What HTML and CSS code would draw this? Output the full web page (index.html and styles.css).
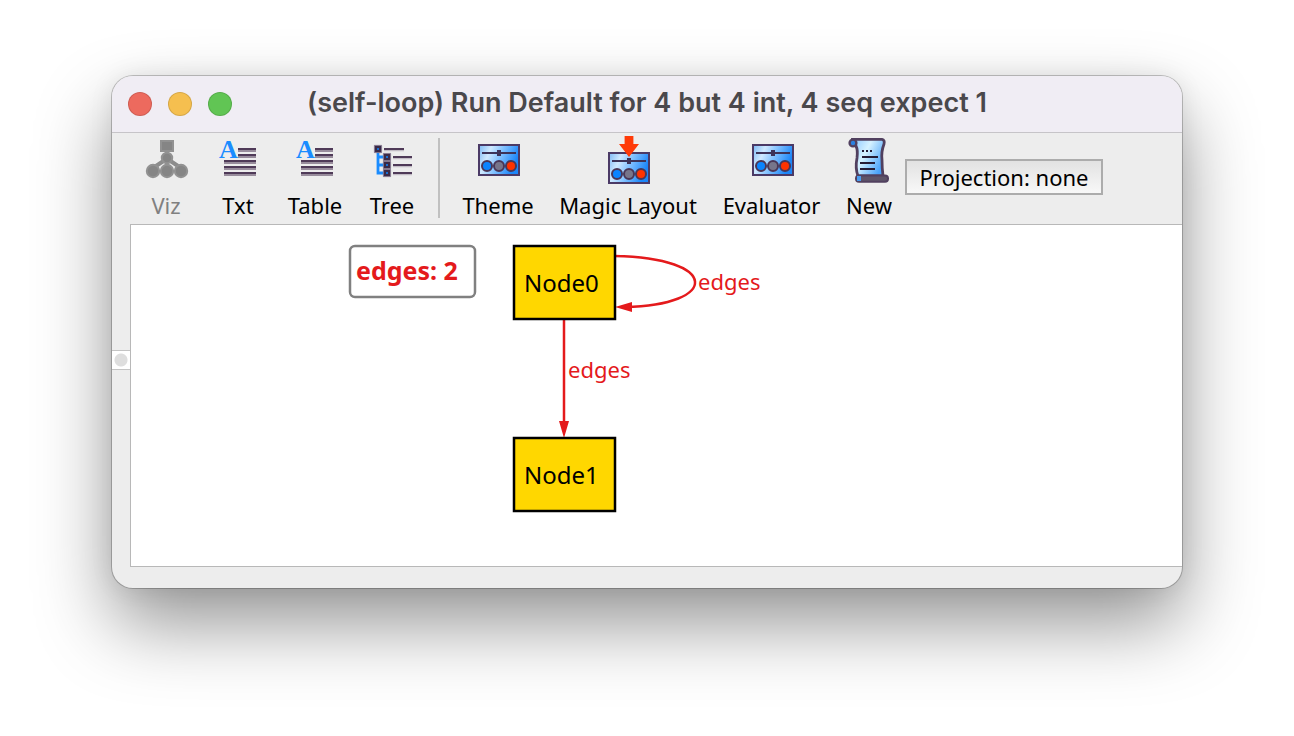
FILE: index.html
```html
<!DOCTYPE html>
<html lang="en">
<head>
<meta charset="utf-8">
<title>(self-loop) Run Default for 4 but 4 int, 4 seq expect 1</title>
<link rel="stylesheet" href="styles.css">
</head>
<body>
<svg class="defs" aria-hidden="true">
  <defs>
    <linearGradient id="panel" x1="0" y1="0" x2="1" y2="0.3">
      <stop offset="0" stop-color="#7db9f5"/><stop offset="0.3" stop-color="#cfe9ff"/><stop offset="0.6" stop-color="#7fc0ff"/><stop offset="1" stop-color="#1c86f8"/>
    </linearGradient>
    <linearGradient id="paper" x1="0" y1="0" x2="1" y2="0.6">
      <stop offset="0" stop-color="#8cc8ff"/><stop offset="0.45" stop-color="#d6f2ff"/><stop offset="1" stop-color="#49a2fa"/>
    </linearGradient>
    <g id="mixer">
      <rect x="2.5" y="4.5" width="20" height="15" fill="url(#panel)" stroke="#4b3a66"/>
      <path d="M4 8.5H21" stroke="#3d3358"/>
      <rect x="11.5" y="7" width="2" height="3" fill="#3d3358"/>
      <g stroke="#4a3656">
        <circle cx="6.5" cy="15" r="2.5" fill="#0a84ff"/>
        <circle cx="12.5" cy="15" r="2.5" fill="#77758a"/>
        <circle cx="18.5" cy="15" r="2.5" fill="#ff3300"/>
      </g>
    </g>
    <g id="lines">
      <path d="M12 6.5H21M12 9.5H21M5 12.5H21M5 15.5H21M5 18.5H21" stroke="#4f3a58"/>
      <path d="M12 7.5H21M12 10.5H21M5 13.5H21M5 16.5H21M5 19.5H21" stroke="#988c9c"/>
      <text class="letter" x="2.5" y="11">A</text>
    </g>
  </defs>
</svg>
<main class="window">
  <header class="titlebar">
    <div class="lights">
      <button class="light close" aria-label="Close"></button>
      <button class="light minimize" aria-label="Minimize"></button>
      <button class="light maximize" aria-label="Zoom"></button>
    </div>
    <h1 class="title">(self-loop) Run Default for 4 but 4 int, 4 seq expect 1</h1>
  </header>
  <nav class="toolbar">
    <button class="tool" disabled>
      <svg class="icon" viewBox="0 0 24 24" aria-hidden="true">
        <g fill="#858585" stroke="#929292">
          <path d="M12.5 7V17M11.5 12L5.5 16M13.5 12L19.5 16" stroke="#8c8c8c" stroke-width="2" fill="none"/>
          <rect x="9.5" y="2.5" width="6" height="5"/>
          <circle cx="12.5" cy="11" r="2.6"/>
          <circle cx="5.5" cy="17.500" r="3.100"/>
          <circle cx="12.5" cy="17.500" r="3.100"/>
          <circle cx="19.5" cy="17.500" r="3.100"/>
        </g>
      </svg>
      <span>Viz</span>
    </button>
    <button class="tool"><svg class="icon" viewBox="0 0 24 24" aria-hidden="true"><use href="#lines"/></svg><span>Txt</span></button>
    <button class="tool table"><svg class="icon" viewBox="0 0 24 24" aria-hidden="true"><use href="#lines"/></svg><span>Table</span></button>
    <button class="tool">
      <svg class="icon" viewBox="0 0 24 24" aria-hidden="true">
        <path d="M5 8V18.5H8M5 10.5H8M5 14.5H8" fill="none" stroke="#1a8cff" stroke-width="1.4"/>
        <path d="M8 6.5H18M12.5 10.5H22M12.5 14.5H22M12.5 18.5H22" stroke="#4f3a58"/>
        <path d="M8 7.300H18M12.5 11.300H22M12.5 15.300H22M12.5 19.300H22" stroke="#c2bcc5" stroke-width="0.6"/>
        <path d="M3.200 4.700h3.600v3.600H3.200zM7.700 8.700h3.600v3.600H7.700zM7.700 12.700h3.600v3.600H7.700zM7.700 16.700h3.600v3.600H7.700z" fill="#3a2a48" stroke="#85788e" stroke-width="0.5"/>
        <path d="M4.500 6h1v1h-1zM9 10h1v1H9zM9 14h1v1H9zM9 18h1v1H9z" fill="#1a6fd0"/>
      </svg>
      <span>Tree</span>
    </button>
    <div class="separator"></div>
    <button class="tool theme"><svg class="icon" viewBox="0 0 24 24" aria-hidden="true"><use href="#mixer"/></svg><span>Theme</span></button>
    <button class="tool magic">
      <svg class="icon" viewBox="0 0 24 24" aria-hidden="true"><use href="#mixer" y="4"/><path d="M10.300 0h4.400v4H17.500L12.500 10.500L7.500 4H10.300z" fill="#ff3a08"/></svg>
      <span>Magic Layout</span>
    </button>
    <button class="tool evaluator"><svg class="icon" viewBox="0 0 24 24" aria-hidden="true"><use href="#mixer"/></svg><span>Evaluator</span></button>
    <button class="tool">
      <svg class="icon" viewBox="0 0 24 24" aria-hidden="true">
        <path d="M4 1.700H18.500Q20 2 19.500 4Q18 8 18.500 12Q18.500 16 19 20H6.500Q5 16 6 11Q6.500 7 5.500 5Z" fill="url(#paper)" stroke="#51405f" stroke-width="1.400"/>
        <circle cx="4" cy="3.500" r="1.700" fill="#2a80e0" stroke="#51405f" stroke-width="1.200"/>
        <rect x="5.500" y="19.700" width="16" height="3.200" rx="1.500" fill="#5e5468" stroke="#51405f"/>
        <rect x="6" y="20" width="2" height="2.500" fill="#4a9cf0"/>
        <path d="M8.500 7.500h1m1 0h1m1 0h1M8.500 10.500H16.500M7.500 13.500H15M7.500 16.500H15" stroke="#251c35"/>
      </svg>
      <span>New</span>
    </button>
    <button class="projection">Projection: none</button>
  </nav>
  <div class="content">
    <div class="gutter"><button class="handle" aria-label="Toggle evaluator pane"></button></div>
    <section class="canvas">
      <svg class="graph" width="680" height="300" role="img" aria-label="Instance graph">
        <rect x="219" y="21" width="125" height="51" rx="5" fill="#fff" stroke="#808080" stroke-width="2.5"/>
        <text class="legend" x="225" y="55">edges: 2</text>
        <g class="edge">
          <path d="M484 31C589 33 589 80 494 82"/>
          <path d="M433 93V200"/>
        </g>
        <path class="arrow" d="M484 82l17-5v10zM433 213l-5-17h10z"/>
        <text class="edge-label" x="567" y="65">edges</text>
        <text class="edge-label" x="437" y="153">edges</text>
        <g class="node"><rect x="383" y="21" width="101" height="73"/><text x="393" y="67">Node0</text></g>
        <g class="node"><rect x="383" y="213" width="101" height="73"/><text x="393" y="259">Node1</text></g>
      </svg>
    </section>
  </div>
</main>
</body>
</html>
```
FILE: styles.css
```css
* { box-sizing: border-box; }
body {
  margin: 0;
  min-height: 100vh;
  padding: 76px 112px 148px;
  display: flex;
  background: #fff;
  font: 22px/26px "Noto Sans", "Open Sans", sans-serif;
  color: #000;
}
button {
  margin: 0;
  padding: 0;
  border: 0;
  background: none;
  font: inherit;
  color: inherit;
}
.defs { position: absolute; width: 0; height: 0; }
.window {
  flex: 1;
  min-width: 0;
  display: flex;
  flex-direction: column;
  overflow: hidden;
  border-radius: 21px;
  background: #ededed;
  box-shadow: 0 0 0 1px #00000038, 0 36px 76px #0000006b, 0 0 24px #00000014;
}
.titlebar {
  display: grid;
  grid-template-columns: 120px 1fr 120px;
  align-items: center;
  height: 57px;
  padding: 0 16px;
  border-bottom: 1px solid #c6c4c8;
  background: #f0edf4;
}
.lights { display: flex; gap: 16px; }
.light {
  width: 24px;
  height: 24px;
  border: 1px solid #00000020;
  border-radius: 50%;
}
.close { background: #ed6a5e; }
.minimize { background: #f5bf4f; }
.maximize { background: #61c554; }
.title {
  margin: 0;
  padding-bottom: 2px;
  font: 600 27px/32px Inter, sans-serif;
  color: #4a484c;
  text-align: center;
  white-space: nowrap;
}
.toolbar {
  display: flex;
  gap: 24px;
  height: 91px;
  padding: 3px 30px 6px;
}
.tool {
  display: flex;
  flex-direction: column;
  align-items: center;
  gap: 8px;
  min-width: 48px;
  white-space: nowrap;
}
.table { min-width: 58px; }
.theme { min-width: 72px; }
.magic { min-width: 140px; }
.evaluator { min-width: 99px; }
.tool:disabled { color: #808080; }
.icon { flex: none; width: 48px; height: 48px; }
.letter { font: bold 13px "Liberation Serif", serif; fill: #1a8cff; }
.separator { width: 2px; height: 80px; margin: 2px -2px; background: #c0c0c0; }
.projection {
  align-self: center;
  min-width: 198px;
  height: 36px;
  margin-left: -12px;
  padding: 0 10px;
  border: 2px solid #acacac;
  background: linear-gradient(#e2e2e2, #f8f8f8);
  white-space: nowrap;
}
.content {
  flex: 1;
  display: flex;
  padding-bottom: 21px;
}
.gutter {
  width: 18px;
  display: flex;
  flex-direction: column;
  justify-content: center;
  padding-bottom: 72px;
}
.handle {
  height: 20px;
  border: 1px solid #c4c4c4;
  border-width: 1px 0;
  background: radial-gradient(circle, #dedede 6px, #fff 7px);
}
.canvas {
  flex: 1;
  min-width: 0;
  overflow: hidden;
  border: 1px solid #b8b8b8;
  border-right: 0;
  background: #fff;
}
.graph { display: block; }
.edge { fill: none; stroke: #e41a1c; stroke-width: 2.5; }
.arrow { fill: #e41a1c; }
.edge-label { font-size: 22px; fill: #e41a1c; }
.legend { font-size: 25px; font-weight: bold; fill: #e41a1c; }
.node rect { fill: #ffd700; stroke: #000; stroke-width: 2.5; }
.node text { font-size: 24px; }
```
